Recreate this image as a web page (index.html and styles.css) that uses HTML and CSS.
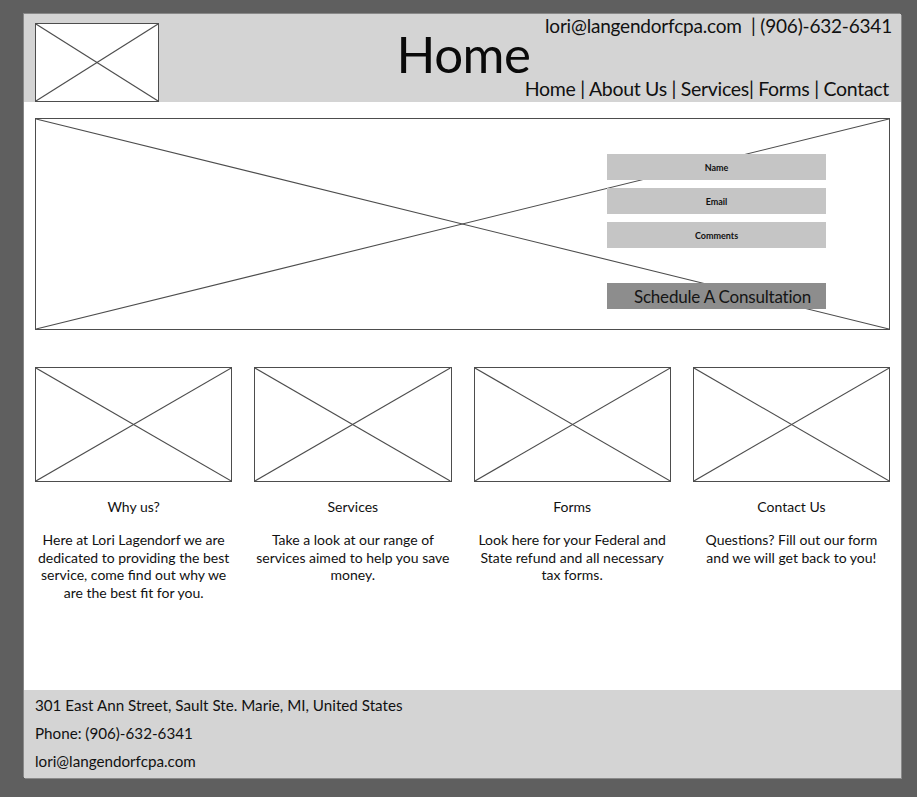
FILE: index.html
```html
<!DOCTYPE html>
<html>
<head>
<meta charset="utf-8">
<link rel="stylesheet" href="styles.css">
</head>
<body>
<div class="canvas">
  <header class="header">
    <div class="logo ph">
      <svg viewBox="0 0 100 100" preserveAspectRatio="none"><line x1="0" y1="0" x2="100" y2="100"/><line x1="0" y1="100" x2="100" y2="0"/></svg>
    </div>
    <h1 class="title">Home</h1>
    <div class="right">
      <div class="contact">lori@langendorfcpa.com &nbsp;| (906)-632-6341</div>
      <nav class="nav">Home | About Us | Services| Forms | Contact</nav>
    </div>
  </header>
  <main class="main">
    <section class="hero ph">
      <svg viewBox="0 0 100 100" preserveAspectRatio="none"><line x1="0" y1="0" x2="100" y2="100"/><line x1="0" y1="100" x2="100" y2="0"/></svg>
      <form class="form">
        <div class="field">Name</div>
        <div class="field">Email</div>
        <div class="field">Comments</div>
        <div class="button">Schedule A Consultation</div>
      </form>
    </section>
    <section class="cards">
      <div class="card">
        <div class="thumb ph"><svg viewBox="0 0 100 100" preserveAspectRatio="none"><line x1="0" y1="0" x2="100" y2="100"/><line x1="0" y1="100" x2="100" y2="0"/></svg></div>
        <h2 class="card-title">Why us?</h2>
        <p class="card-text">Here at Lori Lagendorf we are dedicated to providing the best service, come find out why we are the best fit for you.</p>
      </div>
      <div class="card">
        <div class="thumb ph"><svg viewBox="0 0 100 100" preserveAspectRatio="none"><line x1="0" y1="0" x2="100" y2="100"/><line x1="0" y1="100" x2="100" y2="0"/></svg></div>
        <h2 class="card-title">Services</h2>
        <p class="card-text">Take a look at our range of services aimed to help you save money.</p>
      </div>
      <div class="card">
        <div class="thumb ph"><svg viewBox="0 0 100 100" preserveAspectRatio="none"><line x1="0" y1="0" x2="100" y2="100"/><line x1="0" y1="100" x2="100" y2="0"/></svg></div>
        <h2 class="card-title">Forms</h2>
        <p class="card-text">Look here for your Federal and State refund and all necessary tax forms.</p>
      </div>
      <div class="card">
        <div class="thumb ph"><svg viewBox="0 0 100 100" preserveAspectRatio="none"><line x1="0" y1="0" x2="100" y2="100"/><line x1="0" y1="100" x2="100" y2="0"/></svg></div>
        <h2 class="card-title">Contact Us</h2>
        <p class="card-text">Questions? Fill out our form and we will get back to you!</p>
      </div>
    </section>
  </main>
  <footer class="footer">
    <div class="fline">301 East Ann Street, Sault Ste. Marie, MI, United States</div>
    <div class="fline">Phone: (906)-632-6341</div>
    <div class="fline">lori@langendorfcpa.com</div>
  </footer>
</div>
</body>
</html>
```

FILE: styles.css
```css
* { box-sizing: border-box; }
html, body { margin: 0; padding: 0; }
body {
  background: #5f5f5f;
  font-family: Lato, "Liberation Sans", sans-serif;
  color: #111;
  width: 917px;
  height: 797px;
  overflow: hidden;
}
.canvas {
  margin: 14px 0 0 24px;
  width: 877px;
  height: 764px;
  display: flex;
  flex-direction: column;
  background: #fff;
  box-shadow: 1px 1px 0 #8a8a8a, -1px -1px 0 #888;
}
.ph {
  position: relative;
  border: 1px solid #4d4d4d;
  background: #fff;
}
.ph svg {
  position: absolute;
  inset: 0;
  width: 100%;
  height: 100%;
  display: block;
}
.ph line {
  stroke: #4d4d4d;
  stroke-width: 1.1;
  vector-effect: non-scaling-stroke;
}
.header {
  height: 88px;
  background: #d4d4d4;
  display: grid;
  grid-template-columns: 1fr auto 1fr;
  padding: 9px 9px 0 11px;
}
.logo {
  width: 124px;
  height: 79px;
  align-self: end;
}
.title {
  margin: 0;
  font-weight: 400;
  font-size: 51px;
  line-height: 1;
  padding-top: 5px;
  color: #0a0a0a;
  letter-spacing: -0.5px;
}
.right {
  display: flex;
  flex-direction: column;
  align-items: flex-end;
  justify-content: space-between;
  margin-top: -9px;
  padding-bottom: 1px;
  min-width: 0;
}
.contact {
  font-size: 19px;
  line-height: 24px;
  letter-spacing: -0.2px;
  white-space: nowrap;
}
.nav {
  font-size: 19.5px;
  line-height: 24px;
  letter-spacing: -0.3px;
  white-space: nowrap;
  margin-right: 3px;
}
.main {
  flex: 1;
  padding: 16px 11px 0 11px;
  display: flex;
  flex-direction: column;
}
.hero {
  height: 212px;
}
.form {
  position: absolute;
  left: 571px;
  top: 35px;
  width: 219px;
  margin: 0;
  display: flex;
  flex-direction: column;
  gap: 8px;
}
.field {
  height: 26px;
  background: #c5c5c5;
  font-size: 9px;
  font-weight: 700;
  display: flex;
  align-items: center;
  justify-content: center;
  color: #111;
}
.button {
  margin-top: 27px;
  height: 26px;
  background: #8d8d8d;
  font-size: 17px;
  display: flex;
  align-items: center;
  justify-content: center;
  padding-left: 12px;
  color: #151515;
  letter-spacing: -0.2px;
}
.cards {
  margin-top: 37px;
  display: grid;
  grid-template-columns: repeat(4, 1fr);
  gap: 22px;
}
.card {
  display: flex;
  flex-direction: column;
  align-items: center;
  text-align: center;
}
.thumb {
  width: 100%;
  height: 115px;
}
.card-title {
  margin: 16px 0 0;
  font-size: 14px;
  font-weight: 400;
  line-height: 18px;
}
.card-text {
  margin: 15px 0 0;
  font-size: 14px;
  line-height: 17.5px;
  padding: 0 2px;
}
.footer {
  height: 88px;
  background: #d4d4d4;
  padding: 1px 11px 0;
}
.fline {
  font-size: 15.2px;
  line-height: 28px;
}
```
